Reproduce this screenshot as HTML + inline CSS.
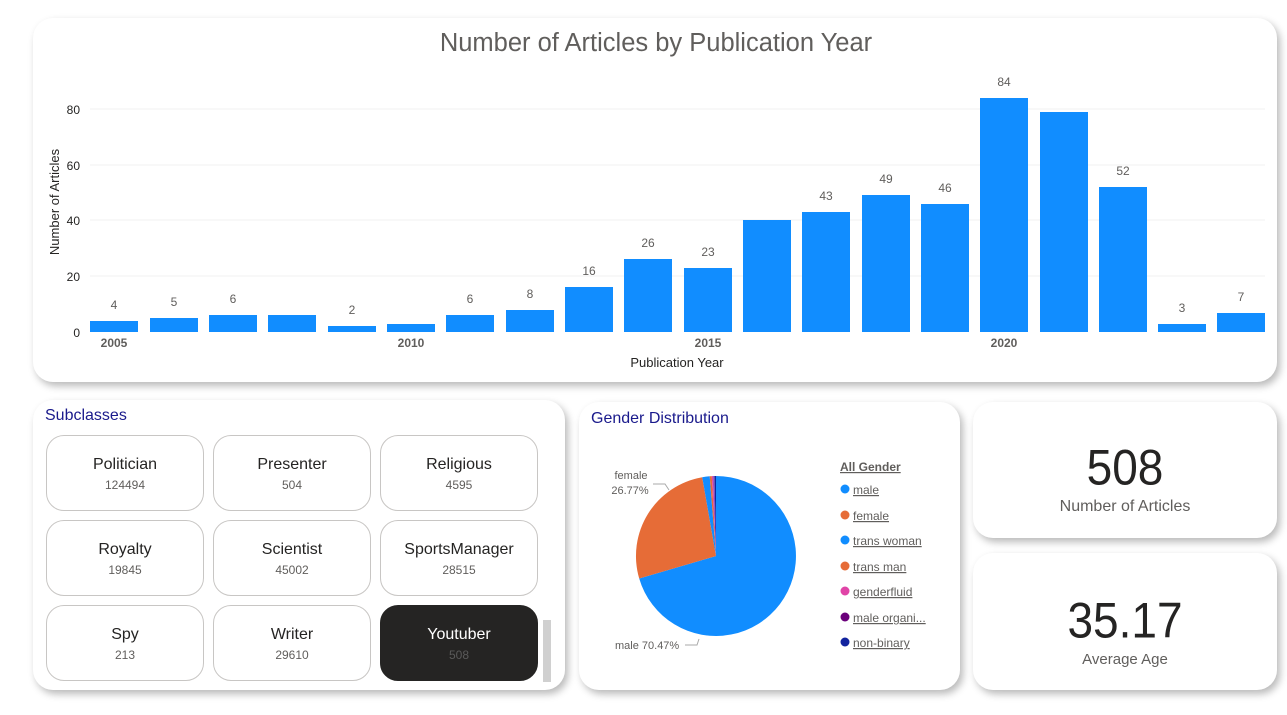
<!DOCTYPE html>
<html><head><meta charset="utf-8"><style>
*{margin:0;padding:0;box-sizing:border-box}
body{width:1287px;height:715px;background:#fff;position:relative;overflow:hidden;font-family:"Liberation Sans",sans-serif}
.card{position:absolute;background:#fff;border-radius:20px;box-shadow:3px 4px 8px rgba(0,0,0,.28)}
.btn{position:absolute;width:158px;height:76px;border:1px solid #c8c6c4;border-radius:18px;text-align:center;background:#fff}
.btn .n{font-size:16px;color:#252423;margin-top:20px}
.btn .v{font-size:12px;color:#605e5c;margin-top:4px}
.btn.sel{background:#252423;border-color:#252423}
.btn.sel .n{color:#fff}.btn.sel .v{color:#5a5a5a}
.ttl{position:absolute;color:#1a1a8c;font-size:16px}
.kv{position:absolute;width:100%;text-align:center;color:#252423}
</style></head><body>
<div class="card" style="left:33px;top:18px;width:1244px;height:364px"></div>
<div class="card" style="left:33px;top:400px;width:532px;height:290px"></div>
<div class="card" style="left:579px;top:402px;width:381px;height:288px"></div>
<div class="card" style="left:973px;top:402px;width:304px;height:136px"><div class="kv" style="top:38px;font-size:46px;transform:scaleY(1.08)">508</div><div class="kv" style="top:96px;font-size:16px;color:#605e5c">Number of Articles</div></div>
<div class="card" style="left:973px;top:553px;width:304px;height:137px"><div class="kv" style="top:40px;font-size:46px;transform:scaleY(1.08)">35.17</div><div class="kv" style="top:98px;font-size:15px;color:#605e5c">Average Age</div></div>

<svg style="position:absolute;left:0;top:0" width="1287" height="400" font-family="Liberation Sans, sans-serif">
<text x="656" y="51" text-anchor="middle" font-size="25.5" fill="#605e5c">Number of Articles by Publication Year</text>
<g stroke="#f2f2f2" stroke-width="1">
<line x1="90" x2="1265" y1="109" y2="109"/><line x1="90" x2="1265" y1="165" y2="165"/><line x1="90" x2="1265" y1="220" y2="220"/><line x1="90" x2="1265" y1="276" y2="276"/>
</g>
<g font-size="12" fill="#252423" text-anchor="end">
<text x="80" y="114">80</text><text x="80" y="170">60</text><text x="80" y="225">40</text><text x="80" y="281">20</text><text x="80" y="337">0</text>
</g>
<text transform="translate(59,202) rotate(-90)" text-anchor="middle" font-size="13" fill="#252423">Number of Articles</text>
<g fill="#118dff">
<rect x="90" y="321" width="48" height="11"/>
<rect x="150" y="318" width="48" height="14"/>
<rect x="209" y="315" width="48" height="17"/>
<rect x="268" y="315" width="48" height="17"/>
<rect x="328" y="326" width="48" height="6"/>
<rect x="387" y="324" width="48" height="8"/>
<rect x="446" y="315" width="48" height="17"/>
<rect x="506" y="310" width="48" height="22"/>
<rect x="565" y="287" width="48" height="45"/>
<rect x="624" y="259" width="48" height="73"/>
<rect x="684" y="268" width="48" height="64"/>
<rect x="743" y="220" width="48" height="112"/>
<rect x="802" y="212" width="48" height="120"/>
<rect x="862" y="195" width="48" height="137"/>
<rect x="921" y="204" width="48" height="128"/>
<rect x="980" y="98" width="48" height="234"/>
<rect x="1040" y="112" width="48" height="220"/>
<rect x="1099" y="187" width="48" height="145"/>
<rect x="1158" y="324" width="48" height="8"/>
<rect x="1217" y="313" width="48" height="19"/>
</g>
<g font-size="12" fill="#605e5c" text-anchor="middle">
<text x="114" y="309">4</text><text x="174" y="306">5</text><text x="233" y="303">6</text><text x="352" y="314">2</text>
<text x="470" y="303">6</text><text x="530" y="298">8</text><text x="589" y="275">16</text><text x="648" y="247">26</text>
<text x="708" y="256">23</text><text x="826" y="200">43</text><text x="886" y="183">49</text><text x="945" y="192">46</text>
<text x="1004" y="86">84</text><text x="1123" y="175">52</text><text x="1182" y="312">3</text><text x="1241" y="301">7</text>
</g>
<g font-size="12" font-weight="bold" fill="#605e5c" text-anchor="middle">
<text x="114" y="347">2005</text><text x="411" y="347">2010</text><text x="708" y="347">2015</text><text x="1004" y="347">2020</text>
</g>
<text x="677" y="367" text-anchor="middle" font-size="13" fill="#252423">Publication Year</text>
</svg>

<div class="ttl" style="left:45px;top:407px">Subclasses</div>
<div class="btn" style="left:46px;top:435px"><div class="n">Politician</div><div class="v">124494</div></div>
<div class="btn" style="left:213px;top:435px"><div class="n">Presenter</div><div class="v">504</div></div>
<div class="btn" style="left:380px;top:435px"><div class="n">Religious</div><div class="v">4595</div></div>
<div class="btn" style="left:46px;top:520px"><div class="n">Royalty</div><div class="v">19845</div></div>
<div class="btn" style="left:213px;top:520px"><div class="n">Scientist</div><div class="v">45002</div></div>
<div class="btn" style="left:380px;top:520px"><div class="n">SportsManager</div><div class="v">28515</div></div>
<div class="btn" style="left:46px;top:605px"><div class="n">Spy</div><div class="v">213</div></div>
<div class="btn" style="left:213px;top:605px"><div class="n">Writer</div><div class="v">29610</div></div>
<div class="btn sel" style="left:380px;top:605px"><div class="n">Youtuber</div><div class="v">508</div></div>
<div style="position:absolute;left:543px;top:620px;width:8px;height:62px;background:#d0d0d0"></div>

<div class="ttl" style="left:591px;top:410px">Gender Distribution</div>
<svg style="position:absolute;left:579px;top:402px" width="381" height="288" font-family="Liberation Sans, sans-serif">
<g transform="translate(-579,-402)">
<path d="M716,556 L716,476 A80,80 0 1,1 639.2,578.5 Z" fill="#118dff"/>
<path d="M716,556 L639.2,578.5 A80,80 0 0,1 702.2,477.2 Z" fill="#e66c37"/>
<path d="M716,556 L702.2,477.2 A80,80 0 0,1 709.7,476.2 Z" fill="#118dff"/>
<path d="M716,556 L709.7,476.2 A80,80 0 0,1 711.8,476.1 Z" fill="#e66c37"/>
<path d="M716,556 L711.8,476.1 A80,80 0 0,1 713.2,476.05 Z" fill="#e044a7"/>
<path d="M716,556 L713.2,476.05 A80,80 0 0,1 714.6,476 Z" fill="#744ec2"/>
<path d="M716,556 L714.6,476 A80,80 0 0,1 716,476 Z" fill="#12239e"/>
<polyline points="653,484 665,484 669,490" fill="none" stroke="#aaa"/>
<polyline points="685,645 697,645 699,639" fill="none" stroke="#aaa"/>
<text x="631" y="479" text-anchor="middle" font-size="11" fill="#605e5c">female</text>
<text x="630" y="494" text-anchor="middle" font-size="11" fill="#605e5c">26.77%</text>
<text x="615" y="649" font-size="11" fill="#605e5c">male 70.47%</text>
<text x="840" y="471" font-size="12" font-weight="bold" fill="#605e5c" text-decoration="underline">All Gender</text>
<g font-size="12" fill="#605e5c" text-decoration="underline">
<circle cx="845" cy="489" r="4.5" fill="#118dff"/><text x="853" y="494">male</text>
<circle cx="845" cy="515" r="4.5" fill="#e66c37"/><text x="853" y="520">female</text>
<circle cx="845" cy="540" r="4.5" fill="#118dff"/><text x="853" y="545">trans woman</text>
<circle cx="845" cy="566" r="4.5" fill="#e66c37"/><text x="853" y="571">trans man</text>
<circle cx="845" cy="591" r="4.5" fill="#e044a7"/><text x="853" y="596">genderfluid</text>
<circle cx="845" cy="617" r="4.5" fill="#6b007b"/><text x="853" y="622">male organi...</text>
<circle cx="845" cy="642" r="4.5" fill="#12239e"/><text x="853" y="647">non-binary</text>
</g>
</g>
</svg>
</body></html>
